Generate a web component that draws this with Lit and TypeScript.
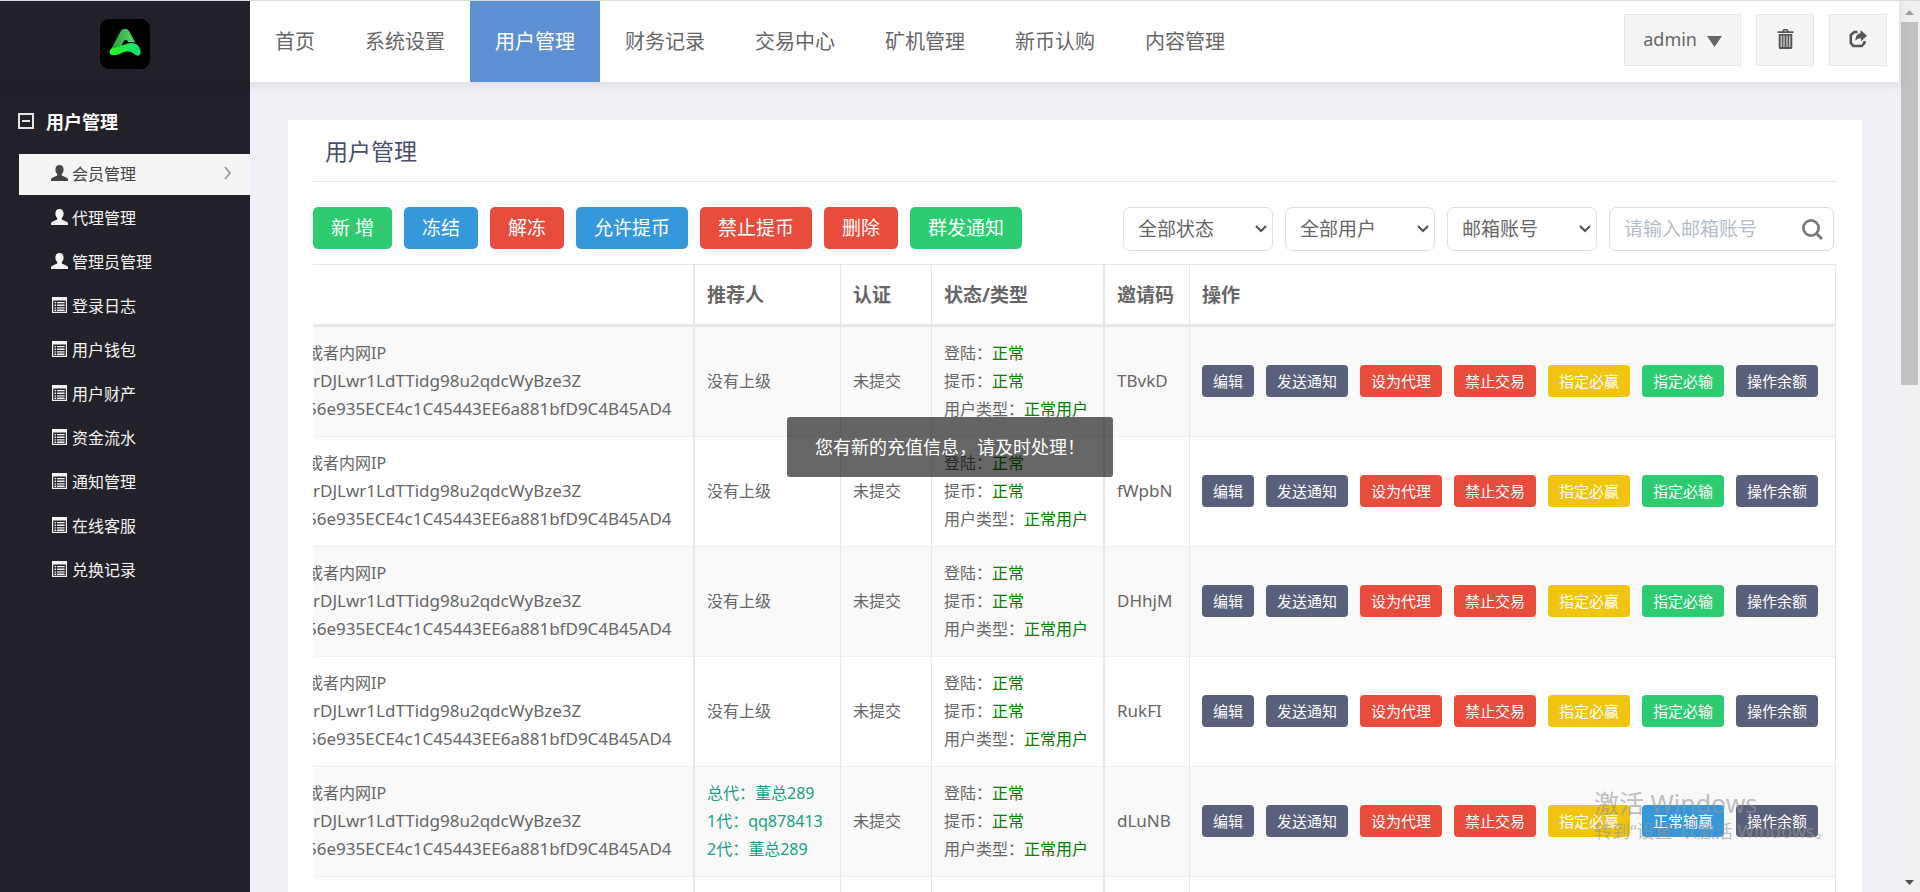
import { LitElement, html, css, svg } from "lit";
import { customElement } from "lit/decorators.js";
import { classMap } from "lit/directives/class-map.js";

interface Member {
  referrers: string[];
  code: string;
  fixed?: boolean;
}

const NAV = ["首页", "系统设置", "用户管理", "财务记录", "交易中心", "矿机管理", "新币认购", "内容管理"];

const SIDE: [string, "user" | "list"][] = [
  ["会员管理", "user"],
  ["代理管理", "user"],
  ["管理员管理", "user"],
  ["登录日志", "list"],
  ["用户钱包", "list"],
  ["用户财产", "list"],
  ["资金流水", "list"],
  ["通知管理", "list"],
  ["在线客服", "list"],
  ["兑换记录", "list"],
];

const TOOLS: [string, string][] = [
  ["新 增", "green"],
  ["冻结", "blue"],
  ["解冻", "red"],
  ["允许提币", "blue"],
  ["禁止提币", "red"],
  ["删除", "red"],
  ["群发通知", "green"],
];

const FILTERS: [string, string][] = [
  ["状态", "全部状态"],
  ["用户", "全部用户"],
  ["账号类型", "邮箱账号"],
];

const MEMBERS: Member[] = [
  { referrers: [], code: "TBvkD" },
  { referrers: [], code: "fWpbN" },
  { referrers: [], code: "DHhjM" },
  { referrers: [], code: "RukFI" },
  { referrers: ["总代：董总289", "1代：qq878413", "2代：董总289"], code: "dLuNB", fixed: true },
  { referrers: [], code: "" },
];

const userIcon = svg`<path d="M8.500 0c2.600 0 4.100 1.900 4.100 4.400 0 2-.8 3.700-1.800 4.600v1.400l4.900 2.400c.9.500 1.300 1 1.300 1.800V16H0v-1.400c0-.8.4-1.300 1.300-1.800l4.900-2.400V9C5.200 8.100 4.400 6.400 4.400 4.400 4.400 1.900 5.900 0 8.500 0z"/>`;
const listIcon = svg`<path fill-rule="evenodd" d="M1 0h15v16H1zM2.200 3.600v11.200h12.600V3.600zM3.500 5h1.600v1.300H3.500zM6 5h7.600v1.300H6zM3.500 7.600h1.600v1.300H3.500zM6 7.600h7.600v1.300H6zM3.500 10.200h1.600v1.300H3.500zM6 10.200h7.600v1.300H6zM3.500 12.600h1.600v1.300H3.500zM6 12.600h7.600v1.300H6z"/>`;

@customElement("app-root")
export class AppRoot extends LitElement {
  static styles = css`
    :host {
      display: block;
      font-family: "Noto Sans", "Noto Sans CJK SC", sans-serif;
      color: #666;
      font-size: 16px;
    }
    * { box-sizing: border-box; }
    button, select, input { font: inherit; color: inherit; }
    a { color: inherit; text-decoration: none; }
    svg { display: block; flex: none; }
    .window {
      display: flex;
      height: 100vh;
      overflow: hidden;
      border-top: 1px solid #d9d9d9;
      background: #f0f1f6;
      position: relative;
    }
    .page { flex: 1; min-width: 0; display: flex; flex-direction: column; }
    header {
      display: flex;
      flex: none;
      height: 81px;
      background: #fff;
      box-shadow: 0 2px 10px rgba(0, 0, 0, 0.1);
      z-index: 1;
    }
    .brand {
      width: 250px;
      flex: none;
      background: #222029;
      display: flex;
      justify-content: center;
      padding-top: 18px;
    }
    nav.top { display: flex; flex: 1; font-size: 20px; line-height: 82px; white-space: nowrap; }
    nav.top a { padding: 0 25px; }
    nav.top a.on { background: #5d90d2; color: #fff; }
    .account { display: flex; gap: 15px; padding: 13px 12px 0 0; }
    .account button {
      height: 52px;
      min-width: 58px;
      background: #f5f5f5;
      border: 1px solid #e6e6e6;
      display: flex;
      align-items: center;
      justify-content: center;
      gap: 10px;
      padding: 0 18px 2px;
      font-size: 18px;
    }
    .caret { margin-top: 5px; }
    .body { flex: 1; min-height: 0; display: flex; align-items: stretch; }
    aside { width: 250px; flex: none; background: #222029; color: #f5f5f5; padding: 22px 0 0 18px; }
    .group { margin: 0; display: flex; align-items: center; gap: 12px; height: 34px; font-size: 18px; font-weight: 700; color: #fff; }
    aside ul { list-style: none; margin: 16px 0 0 1px; padding: 0; display: flex; flex-direction: column; gap: 3px; }
    aside li a { display: flex; align-items: center; gap: 4px; height: 41px; padding: 0 18px 3px 32px; }
    aside li a.on { background: #f5f5f5; color: #444; }
    aside li a span { flex: 1; }
    main { flex: 1; min-width: 0; padding: 38px 37px 0 38px; overflow: hidden; }
    .card { background: #fff; padding: 0 25px 40px; }
    h1 { margin: 0; padding: 0 12px 0; height: 62px; line-height: 63px; font-size: 23px; font-weight: 400; color: #47506a; border-bottom: 1px solid #e6e6e6; }
    .toolbar { display: flex; justify-content: space-between; align-items: flex-start; padding: 25px 3px 13px 0; white-space: nowrap; }
    .tools, .filters { display: flex; gap: 12px; }
    .tools button { height: 42px; padding: 0 18px 2px; border: 0; border-radius: 5px; color: #fff; font-size: 19px; }
    .green { background: #2ecc71; }
    .blue { background: #3498db; }
    .red { background: #e84c3d; }
    .yellow { background: #f1c40f; }
    .slate { background: #59607c; }
    .field { position: relative; width: 150px; font-size: 19px; }
    .field.wide { width: 225px; }
    .field select, .field input {
      appearance: none;
      width: 100%;
      height: 44px;
      border: 1px solid #ddd;
      border-radius: 7px;
      background: #fff;
      padding: 0 14px;
      outline: none;
    }
    .field input::placeholder { color: #b4bcc8; opacity: 1; }
    .field svg { position: absolute; top: 0; bottom: 0; margin: auto; right: 6px; pointer-events: none; }
    .field.wide svg { right: 11px; }
    .list { padding-right: 1px; }
    table { width: 100%; table-layout: fixed; border-collapse: separate; border-spacing: 0; border-right: 1px solid #e7e7e7; white-space: nowrap; }
    .c2 { width: 147px; }
    .c3 { width: 91px; }
    .c4 { width: 172px; }
    .c5 { width: 86px; }
    .c6 { width: 646px; }
    th, td { padding: 0 0 0 12px; text-align: left; border-left: 1px solid #e7e7e7; overflow: hidden; }
    th:first-child, td:first-child { border-left: 0; padding-left: 0; }
    th:nth-child(2), td:nth-child(2), th:nth-child(5), td:nth-child(5) { border-left-width: 2px; }
    th { height: 63px; padding-bottom: 2px; font-size: 19px; border-top: 1px solid #e7e7e7; border-bottom: 3px solid #e7e7e7; }
    td { height: 110px; padding-bottom: 1px; line-height: 28px; border-bottom: 1px solid #eee; }
    tbody tr:nth-child(odd) { background: #f9f9f9; }
    .cut { margin-left: -6px; }
    .latin { font-size: 17px; }
    .ok { color: #008000; }
    .ref { color: #16a085; }
    .actions { display: flex; gap: 12px; }
    .actions button { height: 32px; padding: 0 11px; border: 0; border-radius: 4px; color: #fff; font-size: 15px; }
    .scroll { width: 21px; flex: none; background: #f0f0f0; display: flex; flex-direction: column; align-items: center; padding: 9px 0 7px; }
    .thumb { width: 17px; height: 363px; margin-top: 7px; background: #c1c1c1; }
    .scroll .down { margin-top: auto; }
    .toast {
      position: absolute;
      top: 416px;
      left: 50%;
      transform: translateX(-50%);
      margin-left: -10px;
      z-index: 3;
      height: 60px;
      line-height: 60px;
      padding: 0 28px;
      border-radius: 3px;
      background: rgba(0, 0, 0, 0.6);
      color: #fff;
      font-size: 18px;
      white-space: nowrap;
    }
    .mark { position: absolute; right: 86px; bottom: 47px; width: 240px; z-index: 4; color: rgba(150, 150, 150, 0.62); font-size: 18px; line-height: 28px; pointer-events: none; white-space: nowrap; }
    .mark div:first-child { font-size: 25px; }
  `;

  private logo() {
    return html`<svg width="50" height="50" viewBox="0 0 50 50" role="img" aria-label="A">
      <defs>
        <linearGradient id="ga" x1="0" y1="0" x2="1" y2="0">
          <stop offset="0" stop-color="#1f9a3c" /><stop offset="1" stop-color="#5fdc62" />
        </linearGradient>
        <linearGradient id="gb" x1="0" y1="0" x2="1" y2="0">
          <stop offset="0" stop-color="#2df51e" /><stop offset="1" stop-color="#12e07a" />
        </linearGradient>
      </defs>
      <rect width="50" height="50" rx="9" fill="#000" />
      <path fill="url(#ga)" d="M20.500 12.500c1.900-3.600 6.900-3.600 8.800 0l6.200 11.300c-1.500-.7-3-.9-4.500-.9h-3.200c-.3-2.300-3.300-2.500-4.300-.3l-2 4.600c-3.600 1-7.500.4-10.500 3z" />
      <path fill="url(#gb)" d="M9.600 33c.6-4 3.400-4.500 7.400-5 6-.8 9-3.900 14.500-3.900 5.500 0 8.700 3.800 9.200 8.500.4 3.400-2 4.900-4.400 3.600-3-1.800-5.200-4-9.300-3.600-5 .5-7.500 3.700-13.300 3.700-2.600 0-4.400-1.300-4.100-3.300z" />
    </svg>`;
  }

  private row(m: Member) {
    return html`<tr>
      <td>
        <div class="cut">或者内网IP</div>
        <div class="latin">rDJLwr1LdTTidg98u2qdcWyBze3Z</div>
        <div class="cut latin">56e935ECE4c1C45443EE6a881bfD9C4B45AD4</div>
      </td>
      <td>
        ${m.referrers.length ? m.referrers.map((r) => html`<div class="ref">${r}</div>`) : "没有上级"}
      </td>
      <td>未提交</td>
      <td>
        <div>登陆：<span class="ok">正常</span></div>
        <div>提币：<span class="ok">正常</span></div>
        <div>用户类型：<span class="ok">正常用户</span></div>
      </td>
      <td class="latin">${m.code}</td>
      <td>
        <div class="actions">
          <button class="slate">编辑</button>
          <button class="slate">发送通知</button>
          <button class="red">设为代理</button>
          <button class="red">禁止交易</button>
          <button class="yellow">指定必赢</button>
          ${m.fixed ? html`<button class="blue">正常输赢</button>` : html`<button class="green">指定必输</button>`}
          <button class="slate">操作余额</button>
        </div>
      </td>
    </tr>`;
  }

  render() {
    return html`<div class="window">
      <div class="page">
        <header>
          <div class="brand">${this.logo()}</div>
          <nav class="top">
            ${NAV.map((n) => html`<a href="#" class=${classMap({ on: n === "用户管理" })}>${n}</a>`)}
          </nav>
          <div class="account">
            <button>admin<svg class="caret" width="15" height="11" viewBox="0 0 15 11"><path fill="#666" d="M0 0h15L7.500 11z" /></svg></button>
            <button aria-label="清除缓存">
              <svg width="17" height="20" viewBox="0 0 17 20"><path fill="#555" fill-rule="evenodd" d="M5.500 2.200C5.500.8 6.200 0 7.500 0h2c1.300 0 2 .8 2 2.200h5V4h-16V2.200zM7 2.200h3c0-.6-.2-.8-.7-.8H7.700c-.5 0-.7.2-.7.800zM1.700 5h13.600v13.200c0 1.100-.6 1.800-1.700 1.800H3.400c-1.100 0-1.700-.7-1.700-1.800zM3.700 6.500v11.500h1V6.500zM6.500 6.500v11.500h1V6.500zM9.500 6.500v11.500h1V6.500zM12.300 6.500v11.500h1V6.500z" /></svg>
            </button>
            <button aria-label="退出">
              <svg width="18" height="18" viewBox="0 0 18 18"><path fill="none" stroke="#555" stroke-width="2.600" d="M8.500 2H5.300L1.800 5v8l2.700 3h8.200l2.700-3v-2" /><path fill="#555" d="M11.500 0l6.500 5.700-6 5.600V8.200c-2.600 0-4 .7-5.500 2.600C6.300 6.500 8 3.600 11.500 3.200z" /></svg>
            </button>
          </div>
        </header>
        <div class="body">
          <aside>
            <h2 class="group">
              <svg width="16" height="16" viewBox="0 0 16 16"><path fill="none" stroke="#e4e4e4" stroke-width="2" d="M1 1h14v14H1z" /><path stroke="#e4e4e4" stroke-width="2" d="M4 8h8" /></svg>
              用户管理
            </h2>
            <ul>
              ${SIDE.map(
                ([label, icon], i) => html`<li>
                  <a href="#" class=${classMap({ on: i === 0 })}>
                    <svg width="17" height="16" viewBox="0 0 17 16" fill="currentColor">${icon === "user" ? userIcon : listIcon}</svg>
                    <span>${label}</span>
                    ${i === 0 ? html`<svg width="8" height="14" viewBox="0 0 8 14"><path fill="none" stroke="#999" stroke-width="1.800" d="M1 1l5 6-5 6" /></svg>` : ""}
                  </a>
                </li>`
              )}
            </ul>
          </aside>
          <main>
            <section class="card">
              <h1>用户管理</h1>
              <div class="toolbar">
                <div class="tools">${TOOLS.map(([t, c]) => html`<button class=${c}>${t}</button>`)}</div>
                <div class="filters">
                  ${FILTERS.map(
                    ([label, value]) => html`<label class="field">
                      <select aria-label=${label}><option>${value}</option></select>
                      <svg width="12" height="8" viewBox="0 0 12 8"><path fill="none" stroke="#555" stroke-width="2.200" d="M1 1l5 5 5-5" /></svg>
                    </label>`
                  )}
                  <label class="field wide">
                    <input type="text" aria-label="邮箱账号" placeholder="请输入邮箱账号" />
                    <svg width="21" height="21" viewBox="0 0 21 21"><circle cx="9" cy="9" r="7.600" fill="none" stroke="#7a7a7a" stroke-width="2.800" /><path stroke="#7a7a7a" stroke-width="3" d="M14.500 14.500l5.500 5.500" /></svg>
                  </label>
                </div>
              </div>
              <div class="list">
                <table>
                  <colgroup>
                    <col /><col class="c2" /><col class="c3" /><col class="c4" /><col class="c5" /><col class="c6" />
                  </colgroup>
                  <thead>
                    <tr><th></th><th>推荐人</th><th>认证</th><th>状态/类型</th><th>邀请码</th><th>操作</th></tr>
                  </thead>
                  <tbody>${MEMBERS.map((m) => this.row(m))}</tbody>
                </table>
              </div>
            </section>
          </main>
        </div>
      </div>
      <div class="scroll">
        <svg width="9" height="5" viewBox="0 0 9 5"><path fill="#a0a0a0" d="M0 5h9L4.500 0z" /></svg>
        <div class="thumb"></div>
        <svg class="down" width="9" height="5" viewBox="0 0 9 5"><path fill="#505050" d="M0 0h9L4.500 5z" /></svg>
      </div>
      <div class="toast" role="status">您有新的充值信息，请及时处理！</div>
      <div class="mark"><div>激活 Windows</div><div>转到“设置”以激活 Windows。</div></div>
    </div>`;
  }
}
